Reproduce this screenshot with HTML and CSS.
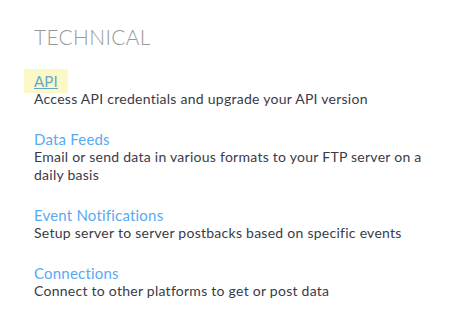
FILE: index.html
```html
<!DOCTYPE html>
<html>
<head>
<meta charset="utf-8">
<link rel="stylesheet" href="styles.css">
</head>
<body>
<section class="panel">
  <h2 class="heading">TECHNICAL</h2>
  <ul class="items">
    <li class="item">
      <a class="item-link is-active" href="#">API</a>
      <p class="item-desc">Access API credentials and upgrade your API version</p>
    </li>
    <li class="item">
      <a class="item-link" href="#">Data Feeds</a>
      <p class="item-desc">Email or send data in various formats to your FTP server on a daily basis</p>
    </li>
    <li class="item">
      <a class="item-link" href="#">Event Notifications</a>
      <p class="item-desc">Setup server to server postbacks based on specific events</p>
    </li>
    <li class="item">
      <a class="item-link" href="#">Connections</a>
      <p class="item-desc">Connect to other platforms to get or post data</p>
    </li>
  </ul>
</section>
</body>
</html>
```
FILE: styles.css
```css
html, body {
  margin: 0;
  padding: 0;
  background: #ffffff;
}
body {
  font-family: "Lato", "Open Sans", sans-serif;
}
.panel {
  padding: 24px 20px 0 34px;
}
.heading {
  margin: 0 0 21px;
  font-size: 21px;
  line-height: 26px;
  font-weight: 300;
  letter-spacing: 0.3px;
  color: #999999;
}
.items {
  list-style: none;
  margin: 0;
  padding: 0;
}
.item {
  margin: 0 0 21px;
}
.item-link {
  display: inline-block;
  font-size: 15px;
  line-height: 18px;
  letter-spacing: 0.2px;
  color: #5aa9f2;
  text-decoration: none;
}
.item-link.is-active {
  color: #64a8c9;
  text-decoration: underline;
  background: #fcf8c8;
  padding: 3px 10px;
  margin: -3px 0 -3px -10px;
}
.item-desc {
  margin: 0;
  font-size: 14px;
  line-height: 18px;
  letter-spacing: 0.26px;
  color: #3a3a48;
  max-width: 400px;
}
```
